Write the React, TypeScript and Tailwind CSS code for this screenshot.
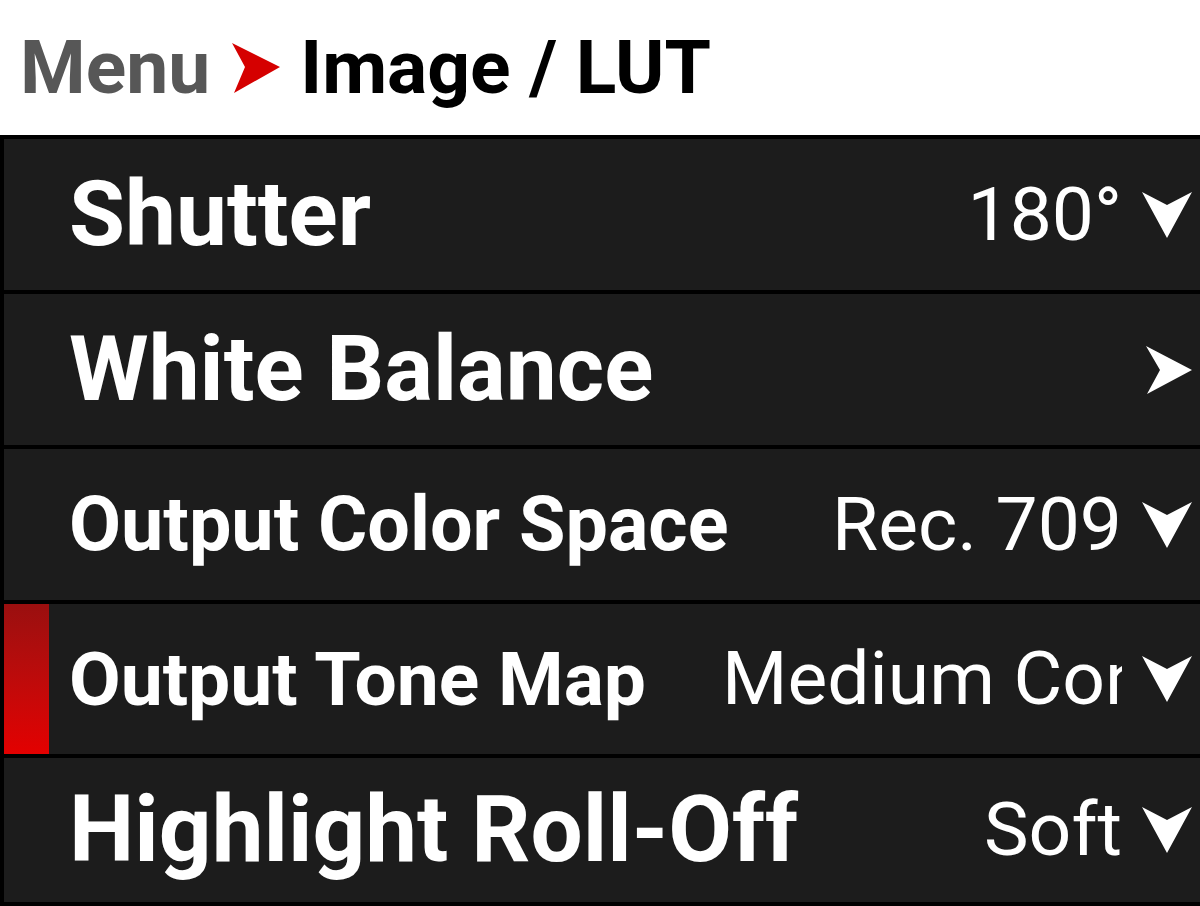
import React from 'react';

type Row = {
  label: string;
  size: string;
  height: string;
  value?: string;
  kind: 'down' | 'right';
  active?: boolean;
};

const rows: Row[] = [
  { label: 'Shutter', size: 'text-[91px]', height: 'h-[155px]', value: '180°', kind: 'down' },
  { label: 'White Balance', size: 'text-[91px]', height: 'h-[155px]', kind: 'right' },
  { label: 'Output Color Space', size: 'text-[75.5px]', height: 'h-[155px]', value: 'Rec. 709', kind: 'down' },
  { label: 'Output Tone Map', size: 'text-[75px]', height: 'h-[154px]', value: 'Medium Contrast', kind: 'down', active: true },
  { label: 'Highlight Roll-Off', size: 'text-[92.5px]', height: 'h-[148px]', value: 'Soft', kind: 'down' },
];

function ChevronDown() {
  return (
    <svg width="50" height="46" viewBox="0 0 50 46" className="shrink-0">
      <polygon points="0,0 25,13 50,0 25,46" fill="#ffffff" />
    </svg>
  );
}

function ChevronRight({ color = '#ffffff' }: { color?: string }) {
  return (
    <svg width="46" height="48" viewBox="0 0 46 48" className="shrink-0">
      <polygon points="0,0 46,24 1,48 14,24" fill={color} />
    </svg>
  );
}

export default function App() {
  return (
    <div className="w-[1200px] h-[906px] bg-black overflow-hidden font-['Roboto',sans-serif]">
      <div className="h-[135px] bg-white flex items-center pl-[20px] text-[75px] leading-none font-bold">
        <span className="text-[#575757]">Menu</span>
        <span className="ml-[22px] mr-[20px] flex items-center">
          <svg width="48" height="50" viewBox="0 0 48 50">
            <polygon points="0,0 48,24 2,50 13,24" fill="#d50000" />
          </svg>
        </span>
        <span className="text-black">Image / LUT</span>
      </div>

      {/* menu rows */}
      <div className="flex flex-col border-l-4 border-black pt-[4px]">
        {rows.map((row) => (
          <div key={row.label} className={`${row.height} flex items-center bg-[#1c1c1c] border-b-4 border-black pr-[8px]`}>
            <div
              className={`w-[45px] self-stretch shrink-0 ${row.active ? 'bg-gradient-to-b from-[#9a0f0f] to-[#e30000]' : ''}`}
            />
            <span className={`ml-[20px] shrink-0 ${row.size} leading-none font-bold text-white whitespace-nowrap`}>
              {row.label}
            </span>
            <span className="flex-1 min-w-0 ml-[76px] overflow-hidden whitespace-nowrap text-right text-[75px] leading-[1.25] font-normal text-white">
              {row.value}
            </span>
            <span className="ml-[20px] flex items-center">
              {row.kind === 'down' ? <ChevronDown /> : <ChevronRight />}
            </span>
          </div>
        ))}
      </div>
    </div>
  );
}
